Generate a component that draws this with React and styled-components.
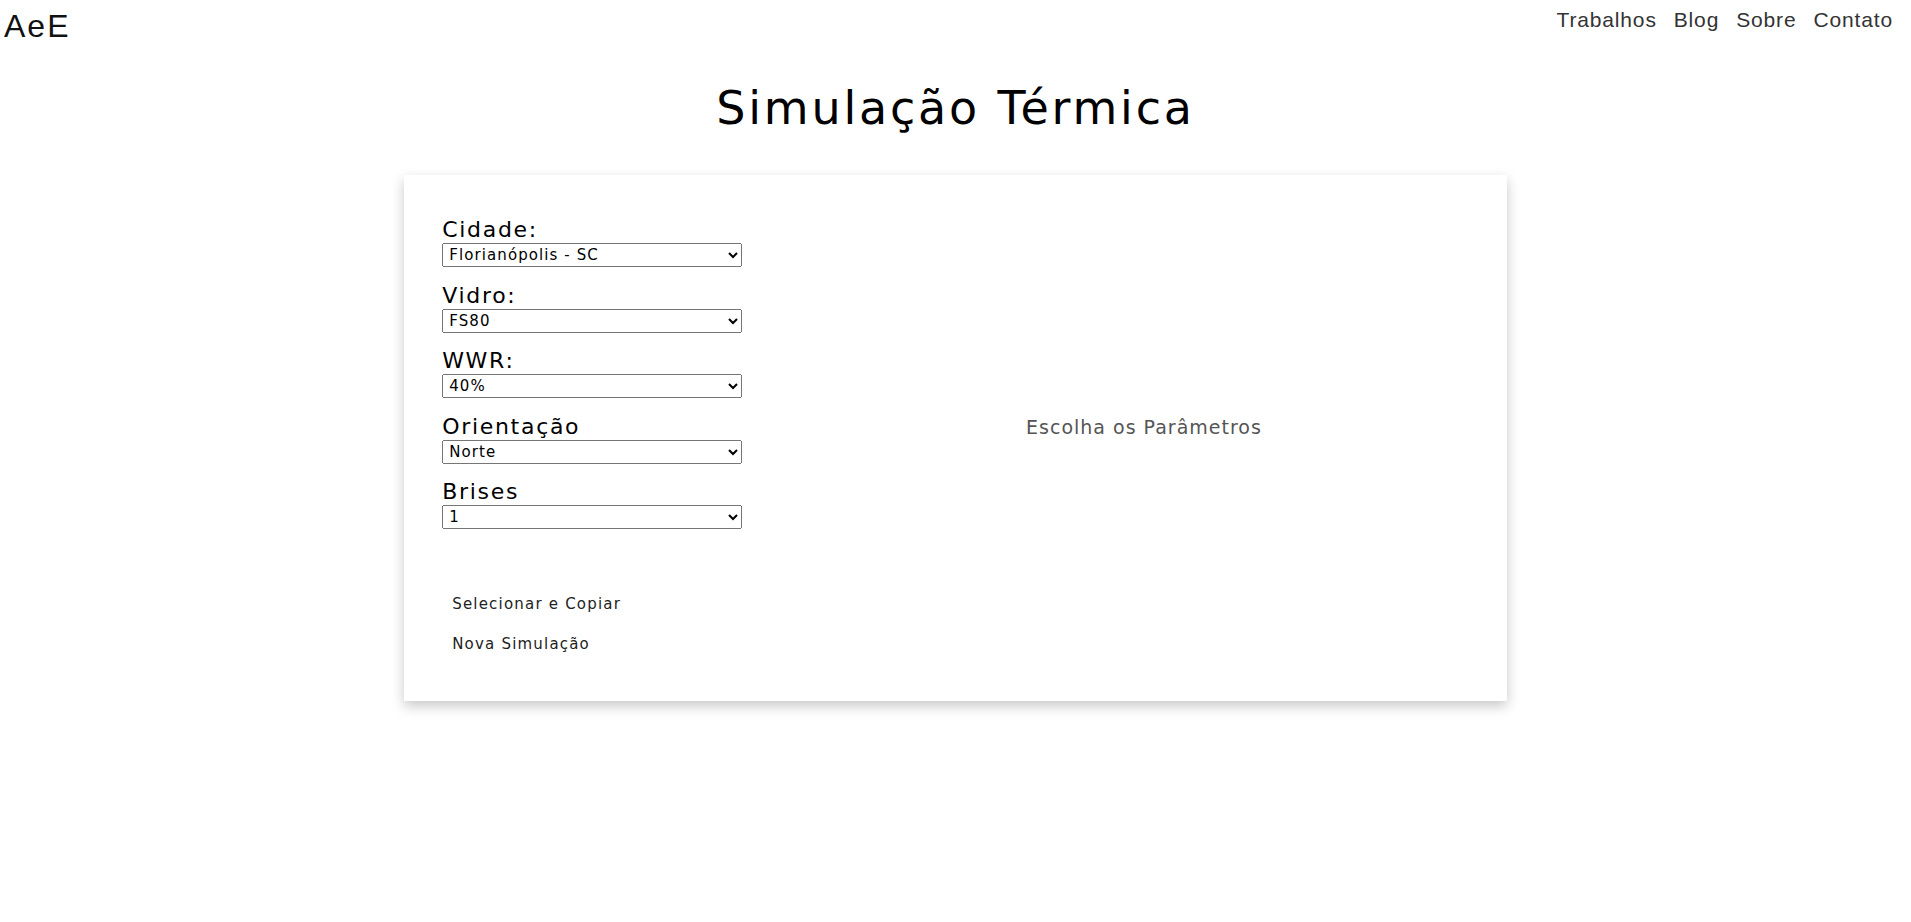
import React from "react";
import styled, { createGlobalStyle } from "styled-components";

const GlobalStyle = createGlobalStyle`
  body {
    margin: 0;
    background: #ffffff;
    font-family: "Liberation Sans", Arial, sans-serif;
    color: #000;
  }
`;

const Header = styled.header`
  display: flex;
  justify-content: space-between;
  align-items: flex-start;
  padding: 8px 18px 0 4px;
`;

const Logo = styled.div`
  font-family: "Liberation Sans", Arial, sans-serif;
  font-size: 32px;
  letter-spacing: 2px;
  color: #111;
`;

const Nav = styled.nav`
  display: flex;
  gap: 17px;
`;

const NavItem = styled.a`
  font-family: "Liberation Sans", Arial, sans-serif;
  font-size: 21px;
  letter-spacing: 0.85px;
  color: #333;
  text-decoration: none;
  cursor: pointer;
`;

const Title = styled.h1`
  margin: 36px 0 40px;
  text-align: center;
  font-family: "DejaVu Sans", sans-serif;
  font-weight: normal;
  font-size: 46px;
  letter-spacing: 2.8px;
  color: #000;
`;

const Card = styled.section`
  width: 57.7%;
  margin: 0 auto 40px;
  box-sizing: border-box;
  padding: 42px 40px 40px 38px;
  background: #fff;
  box-shadow: 0 5px 12px rgba(0, 0, 0, 0.22);
  display: grid;
  grid-template-columns: 379px 1fr;
`;

const Form = styled.div`
  display: flex;
  flex-direction: column;
`;

const Field = styled.label`
  display: flex;
  flex-direction: column;
  align-items: flex-start;
  margin-bottom: 15.5px;
`;

const Label = styled.span`
  font-family: "DejaVu Sans", sans-serif;
  font-size: 22px;
  line-height: 26px;
  letter-spacing: 1.7px;
  color: #000;
`;

const Select = styled.select`
  width: 300px;
  height: 24px;
  font-family: "DejaVu Sans", sans-serif;
  font-size: 15px;
  letter-spacing: 1.1px;
  color: #000;
  padding: 0 2px;
  box-sizing: border-box;
`;

const Actions = styled.div`
  display: flex;
  flex-direction: column;
  align-items: flex-start;
  gap: 6.5px;
  margin-top: 42px;
`;

const Button = styled.button`
  background: transparent;
  border: none;
  padding: 8px 10px;
  font-family: "DejaVu Sans", sans-serif;
  font-size: 15px;
  letter-spacing: 1.2px;
  color: #222;
  cursor: pointer;
`;

const Result = styled.div`
  display: flex;
  align-items: center;
  justify-content: center;
  padding-bottom: 24px;
`;

const Placeholder = styled.p`
  margin: 0;
  font-family: "DejaVu Sans", sans-serif;
  font-size: 19px;
  letter-spacing: 1px;
  color: #555;
`;

const fields = [
  { label: "Cidade:", options: ["Florianópolis - SC", "São Paulo - SP", "Curitiba - PR"] },
  { label: "Vidro:", options: ["FS80", "FS60", "Incolor"] },
  { label: "WWR:", options: ["40%", "20%", "60%", "80%"] },
  { label: "Orientação", options: ["Norte", "Sul", "Leste", "Oeste"] },
  { label: "Brises", options: ["1", "2", "3"] },
];

const App = () => {
  return (
    <>
      <GlobalStyle />
      <Header>
        <Logo>AeE</Logo>
        <Nav>
          <NavItem>Trabalhos</NavItem>
          <NavItem>Blog</NavItem>
          <NavItem>Sobre</NavItem>
          <NavItem>Contato</NavItem>
        </Nav>
      </Header>
      <Title>Simulação Térmica</Title>
      <Card>
        <Form>
          {fields.map((f) => (
            <Field key={f.label}>
              <Label>{f.label}</Label>
              <Select defaultValue={f.options[0]}>
                {f.options.map((o) => (
                  <option key={o}>{o}</option>
                ))}
              </Select>
            </Field>
          ))}
          <Actions>
            <Button>Selecionar e Copiar</Button>
            <Button>Nova Simulação</Button>
          </Actions>
        </Form>
        <Result>
          <Placeholder>Escolha os Parâmetros</Placeholder>
        </Result>
      </Card>
    </>
  );
};

export default App;
